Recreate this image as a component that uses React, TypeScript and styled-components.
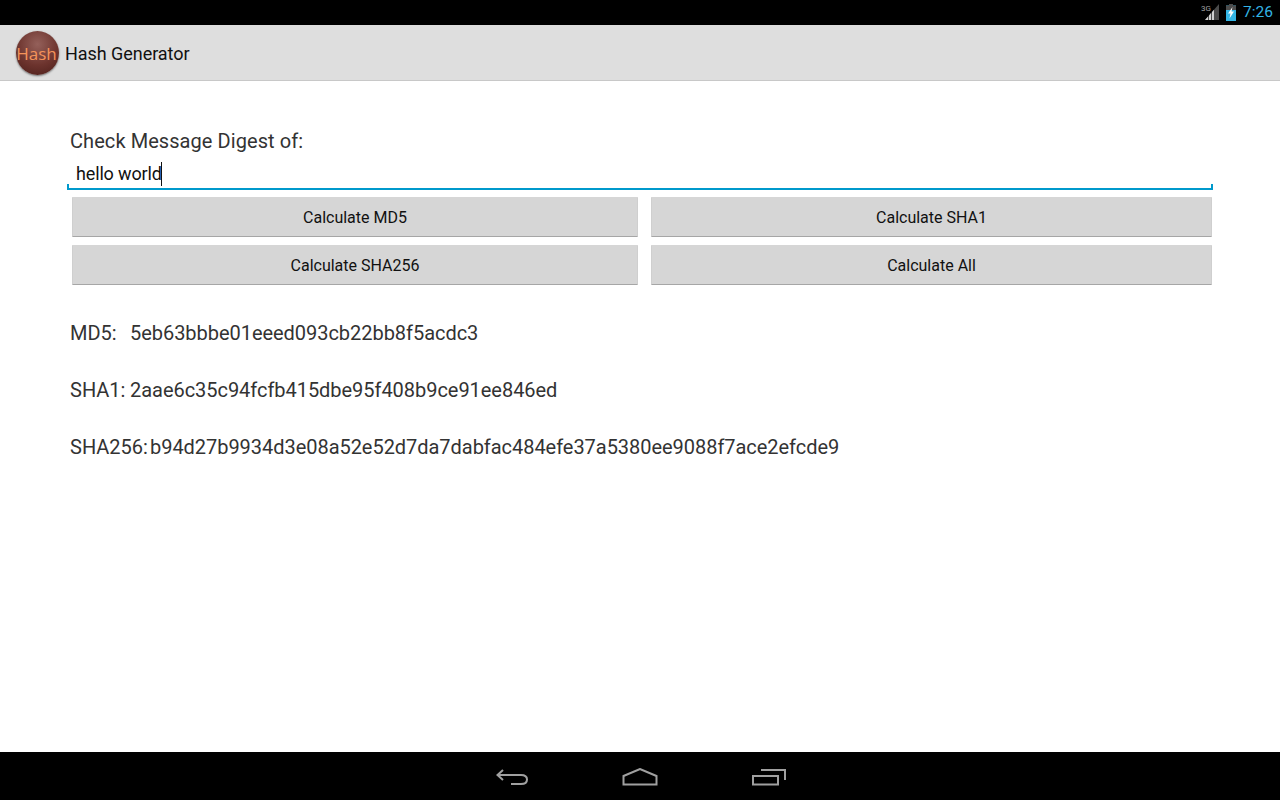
import React from 'react';
import styled, { createGlobalStyle } from 'styled-components';

const GlobalStyle = createGlobalStyle`
  html, body {
    margin: 0;
    padding: 0;
    height: 100%;
    background: #fff;
    font-family: Roboto, "Liberation Sans", sans-serif;
  }
`;

const Screen = styled.div`
  display: flex;
  flex-direction: column;
  width: 1280px;
  height: 800px;
  overflow: hidden;
`;

const StatusBar = styled.div`
  display: flex;
  align-items: center;
  justify-content: flex-end;
  height: 25px;
  padding-right: 7px;
  background: #000;
  flex: none;
`;

const Clock = styled.span`
  margin-left: 7px;
  color: #33b5e5;
  font-size: 15.5px;
  line-height: 25px;
`;

const ActionBar = styled.div`
  display: flex;
  align-items: center;
  box-sizing: border-box;
  height: 56px;
  padding-left: 16px;
  background: #dedede;
  border-bottom: 1px solid #c8c8c8;
  flex: none;
`;

const Logo = styled.div`
  display: flex;
  align-items: center;
  justify-content: center;
  box-sizing: border-box;
  width: 43px;
  height: 44px;
  padding: 2px 2px 0 0;
  border-radius: 50%;
  background: radial-gradient(circle at 50% 30%, #94605a 0%, #6d342e 55%, #4a1d19 100%);
  box-shadow: 0 1px 2px rgba(0, 0, 0, 0.5);
  color: #f4935a;
  font-family: "Open Sans", sans-serif;
  font-size: 17px;
  flex: none;
`;

const AppTitle = styled.div`
  margin: 2px 0 0 6px;
  color: #111;
  font-size: 18px;
  letter-spacing: -0.05px;
`;

const Content = styled.main`
  flex: 1;
  padding: 48px 67px 0;
`;

const PromptLabel = styled.div`
  padding-left: 3px;
  color: #333;
  font-size: 20px;
  line-height: 24px;
  letter-spacing: 0.07px;
`;

const InputRow = styled.div`
  position: relative;
  box-sizing: border-box;
  width: 1146px;
  height: 34px;
  margin-top: 3px;
  padding: 6px 0 0 9px;
  border-bottom: 2px solid #0099cc;
  color: #111;
  font-size: 18px;
  line-height: 24px;
  letter-spacing: -0.15px;

  &::before,
  &::after {
    content: '';
    position: absolute;
    bottom: 0;
    width: 2px;
    height: 4px;
    background: #0099cc;
  }
  &::before {
    left: 0;
  }
  &::after {
    right: 0;
  }
`;

const Caret = styled.span`
  display: inline-block;
  width: 1px;
  height: 24px;
  margin-left: -1px;
  background: #111;
  vertical-align: -6px;
`;

const ButtonGrid = styled.div`
  display: grid;
  grid-template-columns: 566px 561px;
  column-gap: 13px;
  row-gap: 8px;
  margin: 7px 0 0 5px;
`;

const ActionButton = styled.button`
  box-sizing: border-box;
  height: 40px;
  padding: 2px 0 0;
  border: none;
  border-bottom: 1px solid #a6a6a6;
  border-right: 1px solid #cfcfcf;
  border-left: 1px solid #cfcfcf;
  border-radius: 1px;
  background: #d6d6d6;
  color: #111;
  font-family: inherit;
  font-size: 16px;
`;

const Results = styled.div`
  display: flex;
  flex-direction: column;
  gap: 33px;
  margin: 36px 0 0 3px;
`;

const ResultRow = styled.div`
  display: flex;
  color: #333;
  font-size: 20px;
  line-height: 24px;
`;

const ResultName = styled.span<{ $width: number }>`
  width: ${(p) => p.$width}px;
  flex: none;
`;

const ResultValue = styled.span`
  letter-spacing: -0.04px;
`;

const NavBar = styled.nav`
  display: flex;
  align-items: center;
  justify-content: center;
  gap: 94px;
  height: 48px;
  background: #000;
  flex: none;

  svg {
    margin-top: 4px;
  }
`;

const SignalSvg = styled.svg`
  margin-top: -1px;
`;

const BatterySvg = styled.svg`
  margin-left: 7px;
`;

const hashes = [
  { name: 'MD5:', width: 60, value: '5eb63bbbe01eeed093cb22bb8f5acdc3' },
  { name: 'SHA1:', width: 60, value: '2aae6c35c94fcfb415dbe95f408b9ce91ee846ed' },
  { name: 'SHA256:', width: 80, value: 'b94d27b9934d3e08a52e52d7da7dabfac484efe37a5380ee9088f7ace2efcde9' },
];

function SignalIcon() {
  return (
    <SignalSvg width="18" height="17" viewBox="0 0 18 17">
      <text x="0" y="7" fill="#a0a0a0" fontSize="8" fontFamily="Roboto, sans-serif">3G</text>
      <path d="M4 16 L18 0 V16 Z" fill="#4a4a4a" />
      <path d="M4 16 L7 12.6 V16 Z M8 11.4 L10 9.1 V16 H8 Z M11 8 L13 5.7 V16 H11 Z" fill="#d0d0d0" />
    </SignalSvg>
  );
}

function BatteryIcon() {
  return (
    <BatterySvg width="10" height="17" viewBox="0 0 10 17">
      <path d="M3 0 h4 v1.5 h3 V17 H0 V1.5 h3 Z" fill="#33b5e5" />
      <path d="M3 0 h4 v1.5 h3 V6 H0 V1.5 h3 Z" fill="#4d4d4d" />
      <path d="M6.5 3 L2 9.5 H4.5 L3.5 14.5 L8 7.5 H5.5 Z" fill="#fff" />
    </BatterySvg>
  );
}

function BackIcon() {
  return (
    <svg width="34" height="20" viewBox="0 0 34 20" fill="none" stroke="#a0a0a0" strokeWidth="2">
      <path d="M9 2 L3.5 7 L9 12" />
      <path d="M3.5 7 H27 C31 7 33 9 33 11.5 C33 14 31 16 27 16 H17" />
    </svg>
  );
}

function HomeIcon() {
  return (
    <svg width="36" height="20" viewBox="0 0 36 20" fill="none" stroke="#a0a0a0" strokeWidth="2">
      <path d="M1.5 16.5 V8 L18 1 L34.5 8 V16.5 Z" />
    </svg>
  );
}

function RecentsIcon() {
  return (
    <svg width="34" height="20" viewBox="0 0 34 20" fill="none" stroke="#a0a0a0" strokeWidth="2">
      <path d="M1 8 H26 V16.5 H1 Z" />
      <path d="M9 2 H33 V12" />
    </svg>
  );
}

export default function App() {
  return (
    <Screen>
      <GlobalStyle />
      <StatusBar>
        <SignalIcon />
        <BatteryIcon />
        <Clock>7:26</Clock>
      </StatusBar>
      <ActionBar>
        <Logo>Hash</Logo>
        <AppTitle>Hash Generator</AppTitle>
      </ActionBar>
      <Content>
        <PromptLabel>Check Message Digest of:</PromptLabel>
        <InputRow>
          hello world<Caret />
        </InputRow>
        <ButtonGrid>
          <ActionButton>Calculate MD5</ActionButton>
          <ActionButton>Calculate SHA1</ActionButton>
          <ActionButton>Calculate SHA256</ActionButton>
          <ActionButton>Calculate All</ActionButton>
        </ButtonGrid>
        <Results>
          {hashes.map((h) => (
            <ResultRow key={h.name}>
              <ResultName $width={h.width}>{h.name}</ResultName>
              <ResultValue>{h.value}</ResultValue>
            </ResultRow>
          ))}
        </Results>
      </Content>
      <NavBar>
        <BackIcon />
        <HomeIcon />
        <RecentsIcon />
      </NavBar>
    </Screen>
  );
}
